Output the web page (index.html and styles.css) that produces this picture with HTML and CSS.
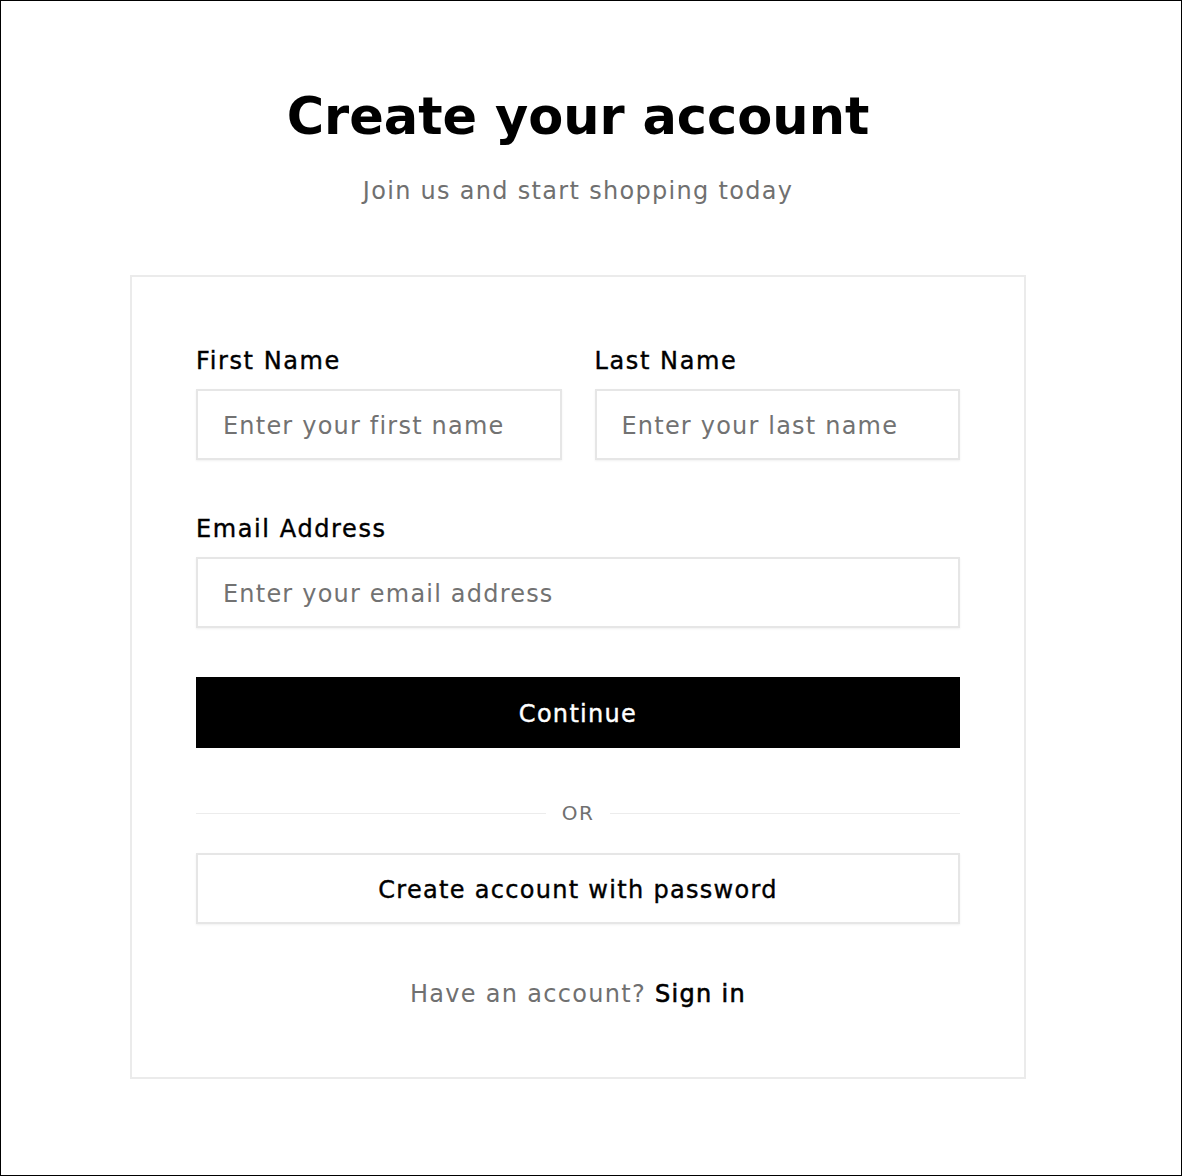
FILE: index.html
```html
<!DOCTYPE html>
<html lang="en">
<head>
<meta charset="utf-8">
<title>Create your account</title>
<link rel="stylesheet" href="styles.css">
</head>
<body>
<div class="frame">
  <main class="page">
    <header class="intro">
      <h1 class="title">Create your account</h1>
      <p class="subtitle">Join us and start shopping today</p>
    </header>
    <section class="card">
      <form class="form">
        <div class="row">
          <label class="field">
            <span class="label">First Name</span>
            <input class="input" type="text" placeholder="Enter your first name">
          </label>
          <label class="field">
            <span class="label">Last Name</span>
            <input class="input" type="text" placeholder="Enter your last name">
          </label>
        </div>
        <label class="field field-email">
          <span class="label">Email Address</span>
          <input class="input" type="email" placeholder="Enter your email address">
        </label>
        <button class="btn btn-primary" type="button">Continue</button>
        <div class="divider"><span class="divider-line"></span><span class="divider-text">OR</span><span class="divider-line"></span></div>
        <button class="btn btn-secondary" type="button">Create account with password</button>
        <p class="signin">Have an account? <a class="signin-link" href="#">Sign in</a></p>
      </form>
    </section>
  </main>
</div>
</body>
</html>
```

FILE: styles.css
```css
* { box-sizing: border-box; }

html, body {
  margin: 0;
  padding: 0;
  background: #fff;
}

body {
  font-family: "DejaVu Sans", sans-serif;
  color: #000;
}

.frame {
  width: 1182px;
  height: 1176px;
  border: 1px solid #000;
  padding-right: 26px;
}

.page {
  width: 896px;
  margin: 0 auto;
  padding-top: 84px;
}

.intro {
  text-align: center;
}

.title {
  margin: 0;
  font-size: 51px;
  line-height: 64px;
  font-weight: 700;
  letter-spacing: 0;
}

.subtitle {
  margin: 26px 0 0;
  font-size: 24px;
  line-height: 32px;
  color: #707070;
  letter-spacing: 1.3px;
}

.card {
  margin-top: 68px;
  border: 2px solid #ebebeb;
  height: 804px;
  padding: 68px 64px 0;
}

.form {
  display: flex;
  flex-direction: column;
}

.row {
  display: grid;
  grid-template-columns: minmax(0, 1fr) minmax(0, 1fr);
  column-gap: 33px;
}

.field {
  display: flex;
  flex-direction: column;
  min-width: 0;
}

.field-email {
  margin-top: 53px;
}

.label {
  font-size: 24px;
  line-height: 32px;
  font-weight: 500;
  letter-spacing: 1.6px;
  margin-bottom: 12px;
  -webkit-text-stroke: 0.4px currentColor;
}

.input {
  width: 100%;
  min-width: 0;
  height: 71px;
  border: 2px solid #e6e6e6;
  box-shadow: 0 1px 2px rgba(0, 0, 0, 0.06);
  padding: 3px 25px 0;
  font-family: inherit;
  font-size: 24px;
  letter-spacing: 1.2px;
  color: #000;
  background: #fff;
  outline: none;
  border-radius: 0;
}

.input::placeholder {
  color: #727272;
}

.btn {
  height: 71px;
  padding: 2px 0 0;
  font-family: inherit;
  font-size: 24px;
  font-weight: 500;
  letter-spacing: 1.3px;
  border-radius: 0;
  cursor: pointer;
  -webkit-text-stroke: 0.4px currentColor;
}

.btn-primary {
  margin-top: 49px;
  background: #000;
  color: #fff;
  border: none;
}

.divider {
  margin-top: 52px;
  height: 26px;
  display: flex;
  align-items: center;
  gap: 16px;
}

.divider-line {
  flex: 1;
  height: 1px;
  background: #ececec;
}

.divider-text {
  font-size: 20px;
  line-height: 26px;
  color: #707070;
  letter-spacing: 1.5px;
}

.btn-secondary {
  margin-top: 27px;
  background: #fff;
  color: #000;
  border: 2px solid #e6e6e6;
  box-shadow: 0 1px 2px rgba(0, 0, 0, 0.06);
}

.signin {
  margin: 54px 0 0;
  text-align: center;
  font-size: 24px;
  line-height: 32px;
  color: #707070;
  letter-spacing: 1.3px;
}

.signin-link {
  color: #000;
  font-weight: 500;
  text-decoration: none;
  -webkit-text-stroke: 0.6px currentColor;
}
```
